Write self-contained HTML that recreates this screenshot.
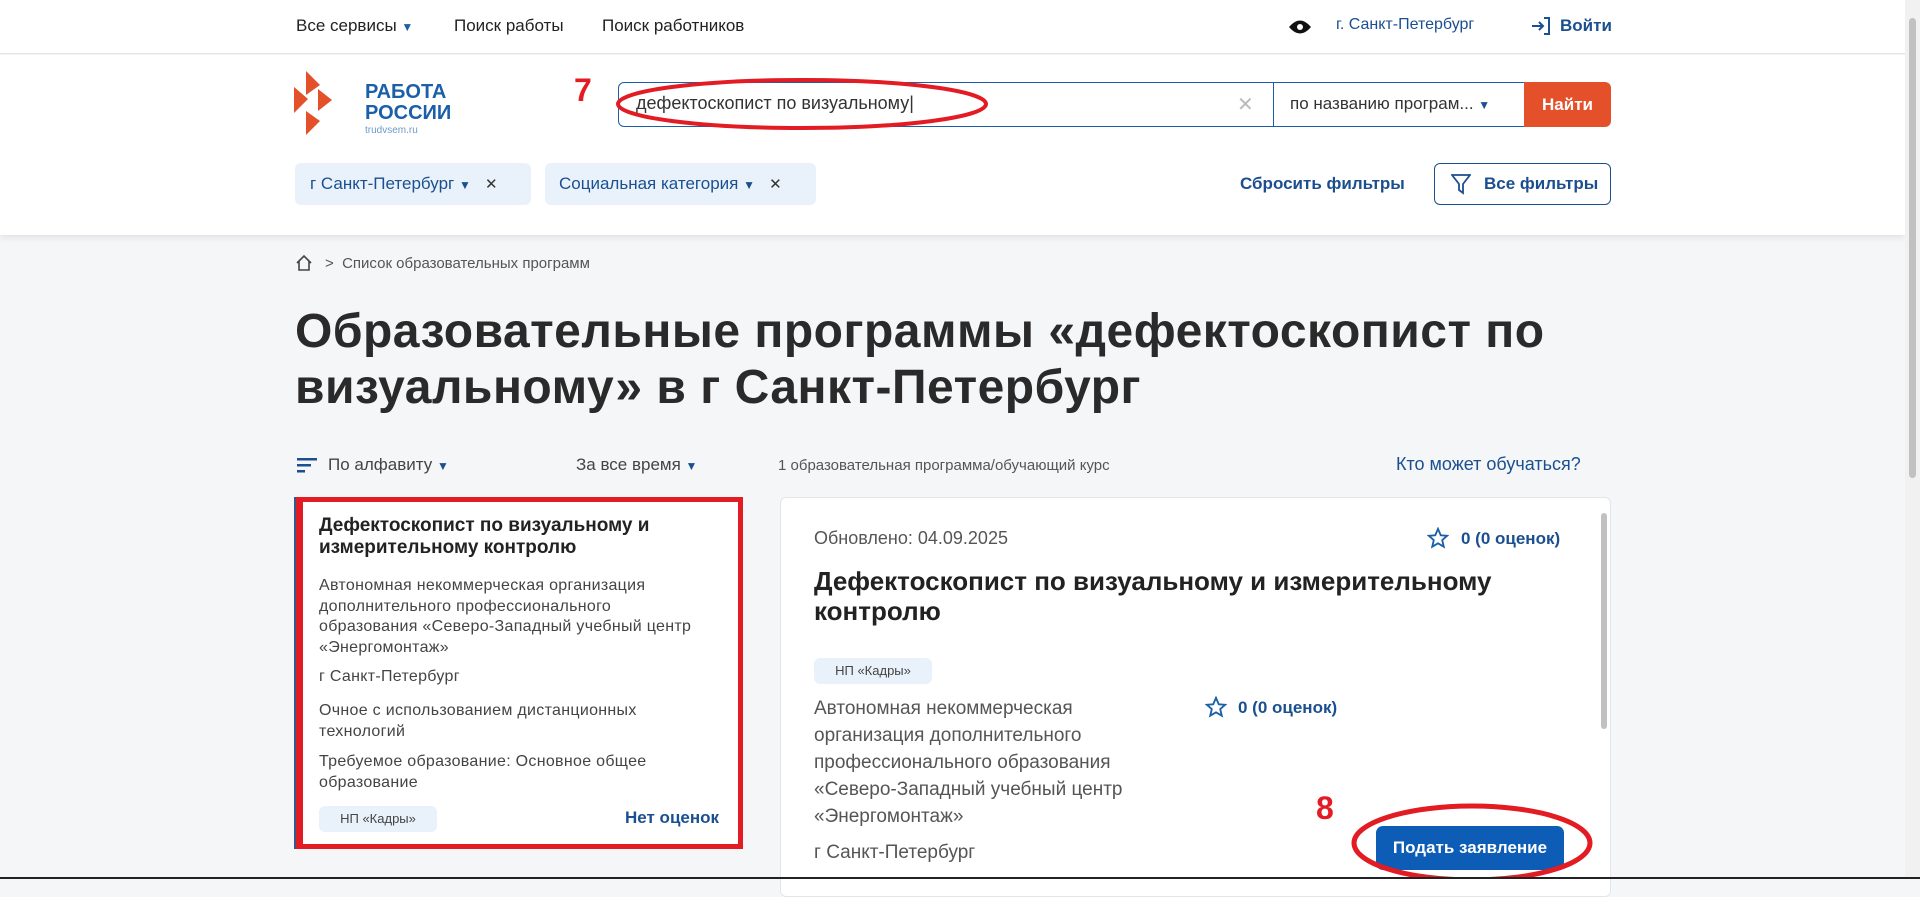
<!DOCTYPE html>
<html><head><meta charset="utf-8"><style>
*{margin:0;padding:0;box-sizing:border-box}
body{width:1920px;height:879px;overflow:hidden;background:#f5f6f8;font-family:"Liberation Sans","Noto Sans CJK SC",sans-serif;position:relative;color:#222}
.a{position:absolute;white-space:nowrap}
.blue{color:#1b4f8f}
</style></head><body>
<!-- top nav -->
<div class="a" style="left:0;top:0;width:1905px;height:54px;background:#fff;border-bottom:1px solid #e3e5e8"></div>
<div class="a" style="left:296px;top:16px;font-size:17px;color:#222">Все сервисы <span style="color:#1b5fa8;font-size:12px">▼</span></div>
<div class="a" style="left:454px;top:16px;font-size:17px">Поиск работы</div>
<div class="a" style="left:602px;top:16px;font-size:17px">Поиск работников</div>
<svg class="a" style="left:1288px;top:17px" width="24" height="20" viewBox="0 0 24 20"><path d="M1 10Q12-3 23 10Q12 23 1 10Z" fill="#111"/><circle cx="12" cy="10" r="3" fill="#fff"/></svg>
<div class="a blue" style="left:1336px;top:16px;font-size:16px">г. Санкт-Петербург</div>
<svg class="a" style="left:1530px;top:16px" width="22" height="20" viewBox="0 0 22 20" fill="none" stroke="#1b4f8f" stroke-width="2"><path d="M2 10h11M9 6l4 4-4 4M14 2h5v16h-5"/></svg>
<div class="a blue" style="left:1560px;top:16px;font-size:17px;font-weight:bold">Войти</div>
<!-- header -->
<div class="a" style="left:0;top:55px;width:1905px;height:180px;background:#fff;box-shadow:0 3px 6px rgba(0,0,0,.08)"></div>
<svg class="a" style="left:294px;top:71px" width="64" height="64" viewBox="0 0 64 64"><path d="M12 0L26 14 12 24Z" fill="#e4502a"/><path d="M0 16L14 28 0 42Z" fill="#e4502a"/><path d="M24 18L38 29 24 40Z" fill="#e4502a"/><path d="M12 40L26 50 12 64Z" fill="#e4502a"/></svg>
<div class="a" style="left:365px;top:82px;font-size:20px;font-weight:bold;color:#1b5fa8;line-height:21px">РАБОТА<br>РОССИИ</div>
<div class="a" style="left:365px;top:125px;font-size:10px;color:#6f9ac8">trudvsem.ru</div>
<div class="a" style="left:574px;top:72px;font-size:32px;font-weight:bold;color:#e31b23">7</div>
<div class="a" style="left:618px;top:82px;width:656px;height:45px;border:1px solid #1b5fa8;border-radius:6px 0 0 6px;background:#fff"></div>
<div class="a" style="left:636px;top:93px;font-size:18px;color:#333">дефектоскопист по визуальному|</div>
<div class="a" style="left:1237px;top:92px;font-size:20px;color:#bbb">✕</div>
<div class="a" style="left:1273px;top:82px;width:252px;height:45px;border:1px solid #1b5fa8;background:#fff"></div>
<div class="a" style="left:1290px;top:94px;font-size:17px;color:#333">по названию програм... <span style="color:#1b4f8f;font-size:12px">▼</span></div>
<div class="a" style="left:1524px;top:82px;width:87px;height:45px;background:#e4502a;border-radius:0 6px 6px 0;color:#fff;font-weight:bold;font-size:17px;text-align:center;line-height:45px">Найти</div>
<svg class="a" style="left:615px;top:76px" width="375" height="56"><ellipse cx="187" cy="28" rx="184" ry="24" fill="none" stroke="#e31b23" stroke-width="4"/></svg>
<div class="a" style="left:295px;top:163px;width:236px;height:42px;background:#e9f2fb;border-radius:6px"></div>
<div class="a blue" style="left:310px;top:174px;font-size:17px">г Санкт-Петербург <span style="font-size:12px">▼</span> &nbsp;&nbsp;<span style="color:#333;font-size:15px">✕</span></div>
<div class="a" style="left:545px;top:163px;width:271px;height:42px;background:#e9f2fb;border-radius:6px"></div>
<div class="a blue" style="left:559px;top:174px;font-size:17px">Социальная категория <span style="font-size:12px">▼</span> &nbsp;&nbsp;<span style="color:#333;font-size:15px">✕</span></div>
<div class="a blue" style="left:1240px;top:174px;font-size:17px;font-weight:bold">Сбросить фильтры</div>
<div class="a" style="left:1434px;top:163px;width:177px;height:42px;border:1px solid #1b4f8f;border-radius:6px;background:#fff"></div>
<svg class="a" style="left:1451px;top:173px" width="20" height="22" viewBox="0 0 20 22" fill="none" stroke="#1b4f8f" stroke-width="1.8"><path d="M1 2h18l-7 9v9l-4-3v-6z"/></svg>
<div class="a blue" style="left:1484px;top:174px;font-size:17px;font-weight:bold">Все фильтры</div>
<!-- scrollbar -->
<div class="a" style="left:1905px;top:0;width:15px;height:879px;background:#f1f1f1"></div>
<div class="a" style="left:1909px;top:18px;width:7px;height:460px;background:#c1c1c1;border-radius:4px"></div>
<!-- breadcrumb -->
<svg class="a" style="left:295px;top:254px" width="18" height="18" viewBox="0 0 18 18" fill="none" stroke="#444" stroke-width="1.6"><path d="M2 9L9 2l7 7M4 7v9h10V7"/></svg>
<div class="a" style="left:325px;top:255px;font-size:15px;color:#555">&gt; &nbsp;Список образовательных программ</div>
<div class="a" style="left:295px;top:304px;font-size:48px;font-weight:bold;line-height:56px;color:#2a2a2a;letter-spacing:0.5px">Образовательные программы «дефектоскопист по<br>визуальному» в г Санкт-Петербург</div>
<!-- sort -->
<svg class="a" style="left:297px;top:457px" width="22" height="16"><rect x="0" y="1" width="20" height="2.5" fill="#1b4f8f"/><rect x="0" y="7" width="14" height="2.5" fill="#1b4f8f"/><rect x="0" y="13" width="8" height="2.5" fill="#1b4f8f"/></svg>
<div class="a" style="left:328px;top:455px;font-size:17px;color:#444">По алфавиту <span style="color:#1b4f8f;font-size:12px">▼</span></div>
<div class="a" style="left:576px;top:455px;font-size:17px;color:#444">За все время <span style="color:#1b4f8f;font-size:12px">▼</span></div>
<div class="a" style="left:778px;top:457px;font-size:15px;color:#555">1 образовательная программа/обучающий курс</div>
<div class="a blue" style="left:1396px;top:454px;font-size:18px">Кто может обучаться?</div>
<!-- left card -->
<div class="a" style="left:296px;top:497px;width:447px;height:352px;background:#fff;border:5px solid #e31b23;border-left:7px solid #e31b23;box-shadow:-2px 0 0 #2a5b93"></div>
<div class="a" style="left:319px;top:515px;font-size:19px;font-weight:bold;line-height:22px">Дефектоскопист по визуальному и<br>измерительному контролю</div>
<div class="a" style="left:319px;top:576px;font-size:16px;color:#444;line-height:20.5px;letter-spacing:0.3px">Автономная некоммерческая организация<br>дополнительного профессионального<br>образования «Северо-Западный учебный центр<br>«Энергомонтаж»</div>
<div class="a" style="left:319px;top:668px;font-size:16px;color:#444;letter-spacing:0.3px">г Санкт-Петербург</div>
<div class="a" style="left:319px;top:701px;font-size:16px;color:#444;line-height:20.5px;letter-spacing:0.3px">Очное с использованием дистанционных<br>технологий</div>
<div class="a" style="left:319px;top:752px;font-size:16px;color:#444;line-height:20.5px;letter-spacing:0.3px">Требуемое образование: Основное общее<br>образование</div>
<div class="a" style="left:319px;top:806px;width:118px;height:26px;background:#e9f2fb;border-radius:6px;font-size:13px;color:#444;text-align:center;line-height:26px">НП «Кадры»</div>
<div class="a blue" style="left:625px;top:808px;font-size:17px;font-weight:bold">Нет оценок</div>
<!-- right card -->
<div class="a" style="left:780px;top:497px;width:831px;height:400px;background:#fff;border:1px solid #e3e5e8;border-radius:6px"></div>
<div class="a" style="left:1601px;top:513px;width:6px;height:216px;background:#c1c1c1;border-radius:3px"></div>
<div class="a" style="left:814px;top:528px;font-size:18px;color:#555">Обновлено: 04.09.2025</div>
<svg class="a" style="left:1427px;top:527px" width="22" height="22" viewBox="0 0 24 24" fill="none" stroke="#1b5fa8" stroke-width="2"><path d="M12 2l3 7 7 .6-5.4 4.7 1.7 7.2L12 17.8 5.7 21.5l1.7-7.2L2 9.6 9 9z"/></svg>
<div class="a blue" style="left:1461px;top:529px;font-size:17px;font-weight:bold">0 (0 оценок)</div>
<div class="a" style="left:814px;top:566px;font-size:26px;font-weight:bold;line-height:30px">Дефектоскопист по визуальному и измерительному<br>контролю</div>
<div class="a" style="left:814px;top:658px;width:118px;height:26px;background:#e9f2fb;border-radius:6px;font-size:13px;color:#444;text-align:center;line-height:26px">НП «Кадры»</div>
<div class="a" style="left:814px;top:695px;font-size:19px;color:#555;line-height:27px">Автономная некоммерческая<br>организация дополнительного<br>профессионального образования<br>«Северо-Западный учебный центр<br>«Энергомонтаж»</div>
<svg class="a" style="left:1205px;top:696px" width="22" height="22" viewBox="0 0 24 24" fill="none" stroke="#1b5fa8" stroke-width="2"><path d="M12 2l3 7 7 .6-5.4 4.7 1.7 7.2L12 17.8 5.7 21.5l1.7-7.2L2 9.6 9 9z"/></svg>
<div class="a blue" style="left:1238px;top:698px;font-size:17px;font-weight:bold">0 (0 оценок)</div>
<div class="a" style="left:814px;top:842px;font-size:19px;color:#555">г Санкт-Петербург</div>
<div class="a" style="left:1316px;top:790px;font-size:32px;font-weight:bold;color:#e31b23">8</div>
<div class="a" style="left:1376px;top:826px;width:188px;height:44px;background:#0d5cb6;border-radius:7px;color:#fff;font-size:17px;font-weight:bold;text-align:center;line-height:44px">Подать заявление</div>
<svg class="a" style="left:1350px;top:800px" width="245" height="79"><ellipse cx="122" cy="43" rx="118" ry="37" fill="none" stroke="#e31b23" stroke-width="5"/></svg>
<div class="a" style="left:0;top:877px;width:1920px;height:2px;background:#222"></div>
</body></html>
